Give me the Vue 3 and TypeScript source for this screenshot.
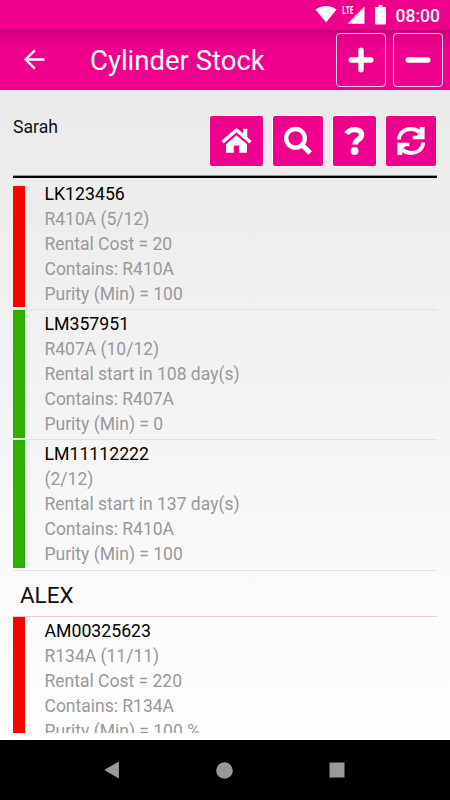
<script setup lang="ts">
interface Cylinder {
  code: string
  status: 'due' | 'ok'
  details: string[]
}

const ownCylinders: Cylinder[] = [
  { code: 'LK123456', status: 'due', details: ['R410A (5/12)', 'Rental Cost = 20', 'Contains: R410A', 'Purity (Min) = 100'] },
  { code: 'LM357951', status: 'ok', details: ['R407A (10/12)', 'Rental start in 108 day(s)', 'Contains: R407A', 'Purity (Min) = 0'] },
  { code: 'LM11112222', status: 'ok', details: ['(2/12)', 'Rental start in 137 day(s)', 'Contains: R410A', 'Purity (Min) = 100'] },
]
const alexCylinders: Cylinder[] = [
  { code: 'AM00325623', status: 'due', details: ['R134A (11/11)', 'Rental Cost = 220', 'Contains: R134A', 'Purity (Min) = 100 %'] },
]
const groups = [
  { name: '', items: ownCylinders },
  { name: 'ALEX', items: alexCylinders },
]
</script>

<template>
  <div class="screen">
    <div class="status-bar">
      <svg class="wifi" width="22" height="18" viewBox="0 0 22 18"><path d="M.5 4.600C6.500-.3 15.500-.3 21.500 4.600L11 17.500Z" fill="#fff" /></svg>
      <svg class="signal" width="24" height="19" viewBox="0 0 24 19">
        <path d="M22.500 1.500v17.300H5.500L13 11.200V9.800h1.400Z" fill="#fff" />
        <text x="0" y="8.900" textLength="11.500" lengthAdjust="spacingAndGlyphs">LTE</text>
      </svg>
      <svg class="battery" width="12" height="20" viewBox="0 0 12 20"><path d="M3.500 0h4v2H10q1 0 1 1v15.500q0 1-1 1H1q-1 0-1-1V3q0-1 1-1h2.500Z" fill="#fff" /></svg>
      <span class="clock">08:00</span>
    </div>

    <header class="app-bar">
      <svg class="back" width="22" height="22" viewBox="0 0 22 22"><path d="M21.500 10.500h-18M11.800 1.300 2.600 10.500l9.200 9.200" fill="none" stroke="#fff" stroke-width="2.400" /></svg>
      <h1>Cylinder Stock</h1>
      <button class="bar-button" aria-label="Add">
        <svg width="26" height="26" viewBox="0 0 26 26"><path d="M13 3.200v19.600M3.200 13h19.600" stroke="#fff" stroke-width="5.400" stroke-linecap="round" /></svg>
      </button>
      <button class="bar-button" aria-label="Remove">
        <svg width="26" height="26" viewBox="0 0 26 26"><path d="M3.200 13h19.600" stroke="#fff" stroke-width="5.400" stroke-linecap="round" /></svg>
      </button>
    </header>

    <main>
      <div class="toolbar">
        <span class="user">Sarah</span>
        <button class="tool home" aria-label="Home">
          <svg width="32" height="28" viewBox="0 0 32 28">
            <path d="m1.500 15.300 14-12.200 14 12.200" fill="none" stroke="#fff" stroke-width="3.400" stroke-linejoin="round" />
            <path d="M22 1.800h4.300v10L22 8ZM15.500 8.200l10.500 9v8.600h-7.800v-7.200h-5.400v7.200H5v-8.600Z" fill="#fff" />
          </svg>
        </button>
        <button class="tool search" aria-label="Search">
          <svg width="30" height="30" viewBox="0 0 30 30"><circle cx="12.500" cy="12.300" r="9.300" fill="none" stroke="#fff" stroke-width="4.400" /><path d="m19.500 19.500 7.800 7.500" stroke="#fff" stroke-width="5" /></svg>
        </button>
        <button class="tool help" aria-label="Help">
          <svg width="22" height="30" viewBox="0 0 22 30"><path d="M2.600 7.800C4.400 4.600 7 3.600 10.700 3.600c4 0 6.900 2 6.900 5.400 0 4.600-6.600 4.500-6.600 9.600" fill="none" stroke="#fff" stroke-width="5.400" /><circle cx="10.600" cy="25" r="3.900" fill="#fff" /></svg>
        </button>
        <button class="tool refresh" aria-label="Refresh">
          <svg width="30" height="30" viewBox="0 0 30 30">
            <g id="arc"><path d="M2.700 13.500C3.500 6.500 8.500 3 15 3c3.800 0 6.600 1.300 8.600 3.400" fill="none" stroke="#fff" stroke-width="3.800" /><path d="M28.600 1v12.200H16.700V9.700h4l3-3V1Z" fill="#fff" /></g>
            <use href="#arc" transform="rotate(180 15 15)" />
          </svg>
        </button>
      </div>

      <div class="list">
        <section v-for="group in groups" :key="group.name">
          <h2 v-if="group.name">{{ group.name }}</h2>
          <article v-for="item in group.items" :key="item.code" class="cylinder">
            <i class="marker" :class="item.status"></i>
            <div class="info">
              <strong>{{ item.code }}</strong>
              <span v-for="line in item.details" :key="line">{{ line }}</span>
            </div>
          </article>
        </section>
      </div>
    </main>

    <nav class="nav-bar">
      <svg width="16" height="18" viewBox="0 0 16 18"><path d="M14.300 1.400v15.200L1.300 9Z" fill="#999" stroke="#999" stroke-width="1.200" stroke-linejoin="round" /></svg>
      <svg width="17" height="17" viewBox="0 0 17 17"><circle cx="8.500" cy="8.500" r="8.300" fill="#999" /></svg>
      <svg width="16" height="16" viewBox="0 0 16 16"><rect x=".5" y=".5" width="15" height="15" fill="#999" /></svg>
    </nav>
  </div>
</template>

<style>
body {
  overflow: hidden;
}
</style>

<style scoped>
.screen {
  display: flex;
  flex-direction: column;
  width: 450px;
  height: 800px;
  overflow: hidden;
  font-family: Roboto, sans-serif;
  color: #111;
}
.screen * {
  box-sizing: border-box;
}
svg {
  display: block;
  flex: none;
}
.status-bar {
  display: flex;
  align-items: flex-start;
  flex: 0 0 30px;
  padding: 5px 10px 0 315px;
  background: #ef008c;
  color: #fff;
}
.wifi {
  margin-right: 5px;
}
.signal {
  margin-right: 9px;
  overflow: visible;
}
.signal text {
  font: 700 11px "Open Sans", sans-serif;
  fill: #fff;
}
.clock {
  margin-left: 8.500px;
  font-size: 17.500px;
  font-weight: 500;
  line-height: 22px;
  white-space: nowrap;
}
.app-bar {
  display: flex;
  align-items: center;
  flex: 0 0 60px;
  padding: 0 7px 0 23px;
  background: linear-gradient(#bd006f 0, #d3007c 2px, #e2008a 8px, #ed008c 18px, #ef008c 25px);
}
h1 {
  flex: 1;
  margin: 0 0 0 45px;
  padding-top: 2px;
  color: #fff;
  font-size: 27.500px;
  font-weight: 400;
  line-height: 36px;
  white-space: nowrap;
}
button {
  display: flex;
  align-items: center;
  justify-content: center;
  padding: 0;
}
.bar-button {
  width: 50px;
  height: 54px;
  border: 1.500px solid #f9cde6;
  border-radius: 4px;
  background: transparent;
}
.bar-button + .bar-button {
  margin-left: 7px;
}
main {
  display: flex;
  flex-direction: column;
  flex: none;
  height: 650px;
  padding: 25px 13px 7px;
  background: linear-gradient(#eaeaea, #f4f4f4 52%, #fafafa 74%, #fefefe);
}
.toolbar {
  display: flex;
  flex: 0 0 63px;
  gap: 8px;
  border-bottom: 2px solid #000;
  background: linear-gradient(#999, #999) bottom / 100% 1px no-repeat;
}
.user {
  flex: 1;
  padding-top: 1px;
  font-size: 17.600px;
  line-height: 22px;
}
.tool {
  height: 52px;
  border: 1px solid #fff;
  border-radius: 3px;
  background: #ef008c;
}
.home {
  width: 55px;
}
.search {
  width: 52px;
}
.help {
  width: 45px;
}
.refresh {
  width: 52px;
}
.list {
  flex: 1 1 0;
  min-height: 0;
  overflow: hidden;
  padding-top: 1.600px;
}
.cylinder {
  display: flex;
  height: 130.400px;
  padding-bottom: 1.500px;
  border-bottom: 1px solid #e2e2e2;
}
.marker {
  flex: none;
  width: 11.500px;
}
.due {
  background: #f00;
}
.ok {
  border: 1px solid #17b20d;
  background: #36ae00;
}
section:first-child .cylinder:first-child .marker {
  margin-top: 6px;
}
.info {
  display: flex;
  flex-direction: column;
  padding: 2px 0 0 20px;
  color: #999;
  font-size: 17.500px;
  line-height: 25px;
  white-space: nowrap;
}
strong {
  color: #000;
  font-size: 17.700px;
  font-weight: 400;
}
h2 {
  height: 46px;
  margin: 0;
  padding-left: 7px;
  border-bottom: 1px solid #f6c5da;
  font-size: 22.400px;
  font-weight: 400;
  line-height: 48px;
}
.nav-bar {
  display: flex;
  align-items: center;
  justify-content: center;
  flex: 0 0 60px;
  gap: 96px;
  padding-right: 1px;
  background: #000;
}
</style>
